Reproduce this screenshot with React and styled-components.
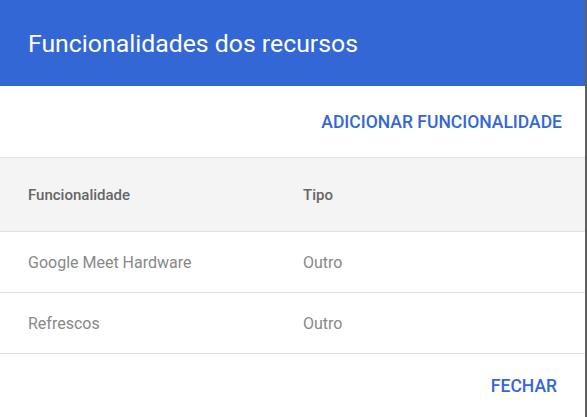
import React from 'react'
import styled, { createGlobalStyle } from 'styled-components'

const GlobalStyle = createGlobalStyle`
    html, body {
        margin: 0;
        padding: 0;
        background: #5f5f5f;
    }
    body {
        font-family: Roboto, "Liberation Sans", sans-serif;
    }
`;

const Dialog = styled.div`
    width: 585px;
    height: 417px;
    background: #fff;
    display: flex;
    flex-direction: column;
`;

const Header = styled.div`
    height: 86px;
    flex-shrink: 0;
    background: #3367d6;
    color: #fff;
    display: flex;
    align-items: center;
    padding: 0 28px;
    box-sizing: border-box;
`;

const Title = styled.h1`
    margin: 0;
    font-size: 24.8px;
    font-weight: 400;
    letter-spacing: 0;
`;

const Actions = styled.div`
    display: flex;
    justify-content: flex-end;
    align-items: center;
    flex-shrink: 0;
    height: ${props => props.height}px;
    padding-right: ${props => props.pad}px;
`;

const TextButton = styled.button`
    border: none;
    background: none;
    padding: 0;
    color: #3367d6;
    font-family: Roboto, "Liberation Sans", sans-serif;
    font-size: 17.5px;
    font-weight: 500;
    text-transform: uppercase;
    cursor: pointer;
`;

const Table = styled.div`
    display: flex;
    flex-direction: column;
    flex-shrink: 0;
    border-top: 1px solid #e0e0e0;
`;

const Row = styled.div`
    display: grid;
    grid-template-columns: 275px 1fr;
    align-items: center;
    height: ${props => (props.head ? 73 : 60)}px;
    flex-shrink: 0;
    padding-left: 28px;
    background: ${props => (props.head ? '#f4f4f4' : '#fff')};
    border-bottom: 1px solid #e0e0e0;
    color: ${props => (props.head ? '#666666' : '#888888')};
    font-size: ${props => (props.head ? 15 : 16)}px;
    font-weight: ${props => (props.head ? 500 : 400)};
`;

const rows = [
    { name: 'Google Meet Hardware', type: 'Outro' },
    { name: 'Refrescos', type: 'Outro' },
]

const App = () => {
    return (
        <>
            <GlobalStyle />
            <Dialog>
                <Header>
                    <Title>Funcionalidades dos recursos</Title>
                </Header>
                <Actions height={71} pad={23}>
                    <TextButton>Adicionar funcionalidade</TextButton>
                </Actions>
                <Table>
                    <Row head>
                        <span>Funcionalidade</span>
                        <span>Tipo</span>
                    </Row>
                    {rows.map(r => (
                        <Row key={r.name}>
                            <span>{r.name}</span>
                            <span>{r.type}</span>
                        </Row>
                    ))}
                </Table>
                <Actions height={63} pad={28}>
                    <TextButton>Fechar</TextButton>
                </Actions>
            </Dialog>
        </>
    )
}

export default App
